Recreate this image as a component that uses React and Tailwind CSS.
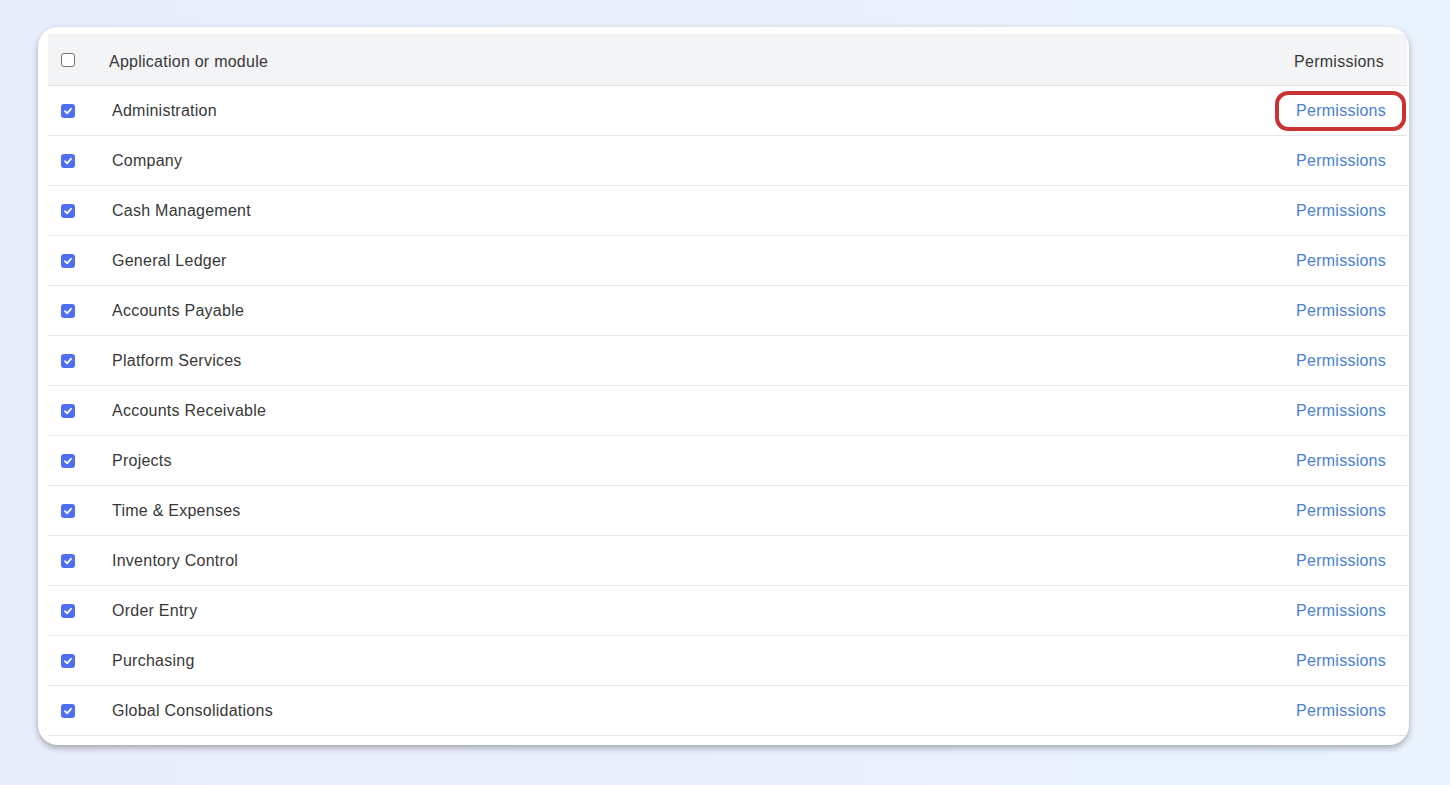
import React from "react";

const modules = [
  "Administration",
  "Company",
  "Cash Management",
  "General Ledger",
  "Accounts Payable",
  "Platform Services",
  "Accounts Receivable",
  "Projects",
  "Time & Expenses",
  "Inventory Control",
  "Order Entry",
  "Purchasing",
  "Global Consolidations",
];

function CheckBox({ checked }) {
  if (!checked) {
    return (
      <span className="block w-[14px] h-[14px] rounded-[3px] border border-[#767676] bg-white" />
    );
  }
  return (
    <span className="flex items-center justify-center w-[14px] h-[14px] rounded-[3px] bg-[#4d6ff0]">
      <svg width="10" height="10" viewBox="0 0 10 10" fill="none">
        <path
          d="M2 5.2 L4.1 7.3 L8 2.8"
          stroke="white"
          strokeWidth="1.8"
          strokeLinecap="round"
          strokeLinejoin="round"
        />
      </svg>
    </span>
  );
}

export default function App() {
  return (
    <div className="w-[1450px] h-[785px] bg-gradient-to-r from-[#e8edfb] to-[#eaf3fd] pt-[27px] pl-[38px] font-['Liberation_Sans',Arial,sans-serif] tracking-[0.25px]">
      <div className="w-[1371px] h-[718px] bg-white rounded-[20px] shadow-[0_3px_6px_rgba(0,0,0,0.3)] pt-[7px] pl-[10px] pr-[2px] overflow-hidden">
        {/* Header */}
        <div className="flex items-center h-[52px] pt-[4px] bg-[#f3f4f6] border-b border-[#e3e5e8] text-[16px] text-[#383838]">
          <div className="w-[61px] pl-[13px] -mt-[4px]">
            <CheckBox checked={false} />
          </div>
          <div className="flex-1">Application or module</div>
          <div className="pr-[23px]">Permissions</div>
        </div>

        {/* Rows */}
        {modules.map((name, i) => (
          <div
            key={name}
            className="flex items-center h-[50px] border-b border-[#e5e7eb] text-[16px]"
          >
            <div className="w-[64px] pl-[13px]">
              <CheckBox checked />
            </div>
            <div className="flex-1 text-[#383838]">{name}</div>
            <div className="pr-[1px]">
              {i === 0 ? (
                <span className="block rounded-[13px] border-[4px] border-[#c83333] pl-[17px] pr-[16px] py-[4px] text-[#4a7fd1]">
                  Permissions
                </span>
              ) : (
                <span className="block pl-[21px] pr-[20px] text-[#4a7fd1]">Permissions</span>
              )}
            </div>
          </div>
        ))}
      </div>
    </div>
  );
}
